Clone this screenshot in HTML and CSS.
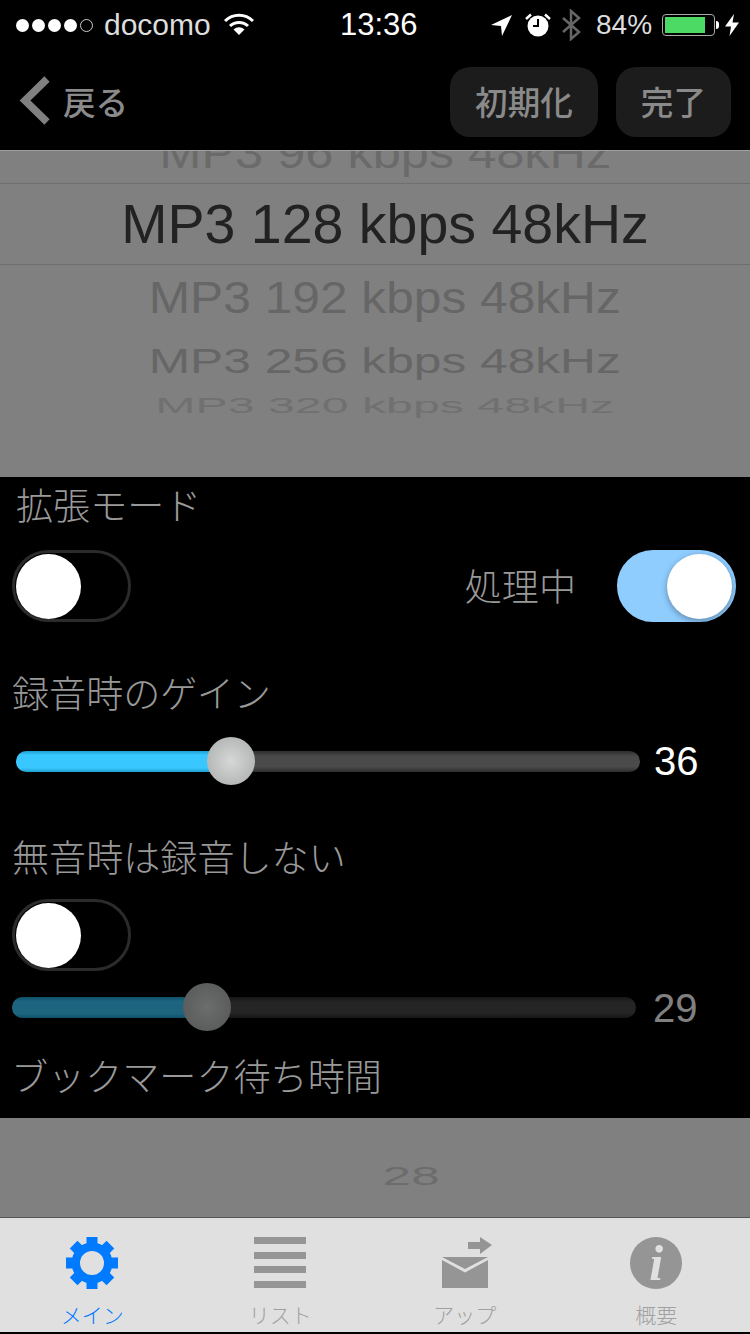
FILE: index.html
```html
<!DOCTYPE html>
<html lang="ja">
<head>
  <meta charset="UTF-8">
  <title>設定</title>
  <link rel="stylesheet" href="styles.css">
</head>
<body>

  <div class="phone">
    <!-- Status Bar -->
    <div class="status-bar">
      <div class="status-left">
        <div class="signal">
          <span class="dot"></span><span class="dot"></span><span class="dot"></span><span class="dot"></span><span class="dot empty"></span>
        </div>
        <span class="carrier">docomo</span>
        <svg class="wifi" width="30" height="22" viewBox="0 0 30 22">
          <path d="M1 8 A20 20 0 0 1 29 8" fill="none" stroke="#fff" stroke-width="3"/>
          <path d="M6 13 A13 13 0 0 1 24 13" fill="none" stroke="#fff" stroke-width="3"/>
          <path d="M9.5 16.5 A8 8 0 0 1 20.5 16.5 L15 22 Z" fill="#fff"/>
        </svg>
      </div>
      <span class="time">13:36</span>
      <div class="status-right">
        <svg width="21" height="21" viewBox="0 0 21 21"><path d="M0 10 L21 0 L11 21 L10 11 Z" fill="#fff"/></svg>
        <svg class="alarm" width="26" height="24" viewBox="0 0 26 24">
          <circle cx="13" cy="13" r="10.5" fill="#fff"/>
          <path d="M13 6 V13 H8" fill="none" stroke="#000" stroke-width="2"/>
          <path d="M1 6 L6 1.500 M25 6 L20 1.500" stroke="#fff" stroke-width="2.500"/>
        </svg>
        <svg class="bluetooth" width="20" height="32" viewBox="0 0 20 32">
          <path d="M1 9 L17 23 L9 30 V2 L17 9 L1 23" fill="none" stroke="#666" stroke-width="2.500"/>
        </svg>
        <span class="percent">84%</span>
        <div class="battery"><div class="battery-level"></div></div>
        <div class="battery-nub"></div>
        <svg class="bolt" width="14" height="22" viewBox="0 0 14 22"><path d="M9 0 L0 12.500 H6 L4.500 22 L14 8.500 H7.500 Z" fill="#fff"/></svg>
      </div>
    </div>

    <!-- Nav Bar -->
    <div class="nav-bar">
      <div class="back">
        <svg width="34" height="50" viewBox="0 0 34 50"><path d="M28 3 L6 24.500 L28 46" fill="none" stroke="#808080" stroke-width="7.500"/></svg>
        <span>戻る</span>
      </div>
      <div class="nav-buttons">
        <div class="nav-button">初期化</div>
        <div class="nav-button">完了</div>
      </div>
    </div>

    <!-- Format Picker -->
    <div class="picker">
      <div class="row row-96"><span>MP3 96 kbps 48kHz</span></div>
      <div class="row row-selected"><span>MP3 128 kbps 48kHz</span></div>
      <div class="row row-192"><span>MP3 192 kbps 48kHz</span></div>
      <div class="row row-256"><span>MP3 256 kbps 48kHz</span></div>
      <div class="row row-320"><span>MP3 320 kbps 48kHz</span></div>
    </div>

    <!-- Settings -->
    <div class="settings">
      <div class="label label-mode">拡張モード</div>
      <div class="switch-row switch-mode">
        <div class="switch"><div class="knob"></div></div>
        <div class="processing">
          <span class="label">処理中</span>
          <div class="switch on"><div class="knob"></div></div>
        </div>
      </div>

      <div class="label label-gain">録音時のゲイン</div>
      <div class="slider slider-gain">
        <div class="track">
          <div class="fill" style="width: 215px"></div>
          <div class="thumb" style="left: 191px"></div>
        </div>
        <span class="value">36</span>
      </div>

      <div class="label label-silent">無音時は録音しない</div>
      <div class="switch-row switch-silent">
        <div class="switch"><div class="knob"></div></div>
      </div>
      <div class="slider slider-silent">
        <div class="track">
          <div class="fill" style="width: 195px"></div>
          <div class="thumb" style="left: 171px"></div>
        </div>
        <span class="value">29</span>
      </div>

      <div class="label label-bookmark">ブックマーク待ち時間</div>
    </div>

    <!-- Bookmark Picker -->
    <div class="picker-small"><span>28</span></div>

    <!-- Tab Bar -->
    <div class="tab-bar">
      <div class="tab tab-main">
        <svg width="54" height="54" viewBox="0 0 54 54">
          <g fill="#007aff">
            <rect x="21.500" y="1" width="11" height="52"/>
            <rect x="21.500" y="1" width="11" height="52" transform="rotate(45 27 27)"/>
            <rect x="21.500" y="1" width="11" height="52" transform="rotate(90 27 27)"/>
            <rect x="21.500" y="1" width="11" height="52" transform="rotate(135 27 27)"/>
            <circle cx="27" cy="27" r="20.500"/>
          </g>
          <circle cx="27" cy="27" r="12" fill="#e0e0e0"/>
        </svg>
        <span>メイン</span>
      </div>
      <div class="tab tab-list">
        <svg width="54" height="54" viewBox="0 0 54 54">
          <g fill="#959595">
            <rect x="1" y="1" width="52" height="7"/>
            <rect x="1" y="16" width="52" height="7"/>
            <rect x="1" y="30" width="52" height="7"/>
            <rect x="1" y="45" width="52" height="7"/>
          </g>
        </svg>
        <span>リスト</span>
      </div>
      <div class="tab tab-up">
        <svg width="54" height="54" viewBox="0 0 54 54">
          <g fill="#959595">
            <path d="M30 6 H42 V1 L54 9 L42 18 V13 H30 Z"/>
            <path d="M4 21 H50 L27 33 Z"/>
            <path d="M4 24 L27 36.500 L50 24 V52 H4 Z"/>
          </g>
        </svg>
        <span>アップ</span>
      </div>
      <div class="tab">
        <div class="info"><i>i</i></div>
        <span>概要</span>
      </div>
    </div>
  </div>

</body>
</html>
```

FILE: styles.css
```css
/* Basic Reset */
* {
  margin: 0;
  padding: 0;
  box-sizing: border-box;
}

body {
  background-color: #000;
  font-family: "Liberation Sans", "Noto Sans CJK JP", sans-serif;
}

.phone {
  width: 750px;
  height: 1334px;
  overflow: hidden;
  display: flex;
  flex-direction: column;
}

/* Status Bar */
.status-bar {
  height: 50px;
  padding: 0 11px 0 16px;
  display: flex;
  align-items: center;
  color: #fff;
}

.status-left {
  width: 324px;
  flex-shrink: 0;
  display: flex;
  align-items: center;
}

.signal {
  display: flex;
  gap: 3px;
}

.dot {
  width: 13px;
  height: 13px;
  border-radius: 50%;
  background-color: #fff;
}

.dot.empty {
  background: none;
  border: 1px solid #ccc;
}

.carrier {
  margin-left: 11px;
  font-size: 30px;
  color: #ddd;
}

.wifi {
  margin-left: 13px;
  margin-top: -3px;
}

.time {
  flex-shrink: 0;
  font-size: 31px;
  width: 151px;
}

.status-right {
  flex-shrink: 0;
  display: flex;
  align-items: center;
}

.alarm {
  margin-left: 13px;
}

.bluetooth {
  margin-left: 11px;
}

.percent {
  margin-left: 14px;
  font-size: 28px;
  color: #ddd;
}

.battery {
  width: 53px;
  height: 22px;
  margin-left: 10px;
  padding: 2px;
  border: 1px solid #aaa;
  border-radius: 4px;
}

.battery-level {
  width: 40px;
  height: 100%;
  background-color: #4cd964;
}

.battery-nub {
  width: 3px;
  height: 8px;
  margin-left: 1px;
  background-color: #fff;
  border-radius: 0 3px 3px 0;
}

.bolt {
  margin-left: 6px;
}

/* Nav Bar */
.nav-bar {
  height: 100px;
  padding: 4px 19px 0 19px;
  display: flex;
  justify-content: space-between;
  align-items: center;
  color: #8a8a8a;
  font-size: 32.6px;
  font-weight: 500;
}

.back {
  display: flex;
  align-items: center;
  gap: 10px;
}

.back svg {
  margin-top: -3px;
}

.back span {
  padding-bottom: 4px;
}

.nav-buttons {
  display: flex;
  gap: 18px;
}

.nav-button {
  height: 70px;
  padding: 0 25px 4px;
  display: flex;
  align-items: center;
  background-color: #1c1c1c;
  border-radius: 20px;
}

/* Format Picker */
.picker {
  height: 327px;
  padding-left: 20px;
  background-color: #808080;
  border-top: 1px solid #a0a0a0;
  overflow: hidden;
}

.row {
  display: flex;
  justify-content: center;
  align-items: center;
  white-space: nowrap;
  font-size: 55.5px;
  color: #666;
}

.row span {
  display: block;
}

.row-96 {
  height: 32px;
  align-items: flex-end;
  color: #6a6a6a;
}

.row-96 span {
  transform: translateY(-15px) scale(.91, .8);
  transform-origin: center bottom;
  line-height: 38px;
}

.row-selected {
  height: 82px;
  margin-left: -20px;
  padding-left: 20px;
  color: #222;
  border-top: 1px solid #6f6f6f;
  border-bottom: 1px solid #6f6f6f;
}

.row-192 {
  height: 66px;
}

.row-192 span {
  transform: scale(.895, .8);
}

.row-256 {
  height: 59px;
}

.row-256 span {
  transform: scale(.895, .63);
}

.row-320 {
  height: 30px;
  color: #707070;
}

.row-320 span {
  transform: scale(.87, .4);
}

/* Settings */
.settings {
  height: 641px;
  padding: 6px 14px 0 12px;
  background-color: #000;
}

.label {
  font-size: 37.1px;
  line-height: 48px;
  color: #999;
  font-weight: 300;
  white-space: nowrap;
}

.label-mode {
  margin-left: 4px;
}

.label-gain {
  margin-top: 49px;
}

.label-silent {
  margin-top: 50px;
}

.label-bookmark {
  margin-top: 23px;
  margin-left: -1px;
}

.switch-row {
  display: flex;
  justify-content: space-between;
  align-items: center;
}

.switch-mode {
  margin-top: 19px;
}

.switch-silent {
  margin-top: 16px;
}

.processing {
  display: flex;
  align-items: center;
  gap: 41px;
}

.processing .label {
  margin-top: 4px;
}

.switch {
  width: 119px;
  height: 72px;
  padding: 1px;
  border: 3px solid #2b2b2b;
  border-radius: 36px;
}

.knob {
  width: 65px;
  height: 65px;
  border-radius: 50%;
  background-color: #fff;
}

.switch.on {
  padding: 1px 0 0 47px;
  background-color: #8fcdff;
  border-color: #8fcdff;
}

.switch.on .knob {
  box-shadow: 0 2px 6px rgba(0, 0, 0, 0.35);
}

/* Sliders */
.slider {
  height: 48px;
  display: flex;
  align-items: center;
}

.slider-gain {
  margin-top: 18px;
  margin-left: 4px;
}

.slider-silent {
  margin-top: 12px;
  opacity: .5;
}

.track {
  position: relative;
  width: 624px;
  height: 21px;
  border-radius: 11px;
  background: linear-gradient(#2e2e2e, #4a4a4a 25%, #4a4a4a 75%, #2e2e2e);
}

.fill {
  height: 100%;
  border-radius: 11px 0 0 11px;
  background: linear-gradient(#1f9fd0, #38c8ff 20%, #38c8ff 80%, #1f9fd0);
}

.thumb {
  position: absolute;
  top: -14px;
  width: 48px;
  height: 48px;
  border-radius: 50%;
  background: radial-gradient(circle, #d6d8d8, #a9abab);
}

.value {
  margin-left: 14px;
  font-size: 40px;
  color: #fff;
}

.slider-silent .value {
  margin-top: 3px;
  margin-left: 17px;
}

/* Bookmark Picker */
.picker-small {
  height: 99px;
  padding-top: 35px;
  background-color: #808080;
  display: flex;
  justify-content: center;
  color: #6c6c6c;
  font-size: 38px;
}

.picker-small span {
  display: block;
  height: 46px;
  line-height: 46px;
  margin-left: 72px;
  transform: scale(1.35, .7);
}

/* Tab Bar */
.tab-bar {
  height: 116px;
  border-top: 1px solid #555;
  border-bottom: 1px solid #000;
  background-color: #e0e0e0;
  padding: 18px 0 0 0;
  display: grid;
  grid-template-columns: repeat(4, 1fr);
}

.tab {
  display: flex;
  flex-direction: column;
  align-items: center;
  font-size: 21px;
  color: #a0a0a0;
  font-weight: 300;
  line-height: 30px;
}

.tab span {
  margin-top: 11px;
  white-space: nowrap;
}

.tab-main {
  padding-right: 3px;
  color: #007aff;
}

.tab-list {
  padding-right: 2px;
}

.tab-up {
  padding-right: 8px;
}

.info {
  width: 52px;
  height: 52px;
  margin: 1px 0;
  border-radius: 50%;
  background-color: #959595;
  display: flex;
  justify-content: center;
  align-items: center;
  color: #e0e0e0;
  font-family: "Liberation Serif", serif;
  font-size: 50px;
  font-weight: 700;
  line-height: 52px;
}
```
